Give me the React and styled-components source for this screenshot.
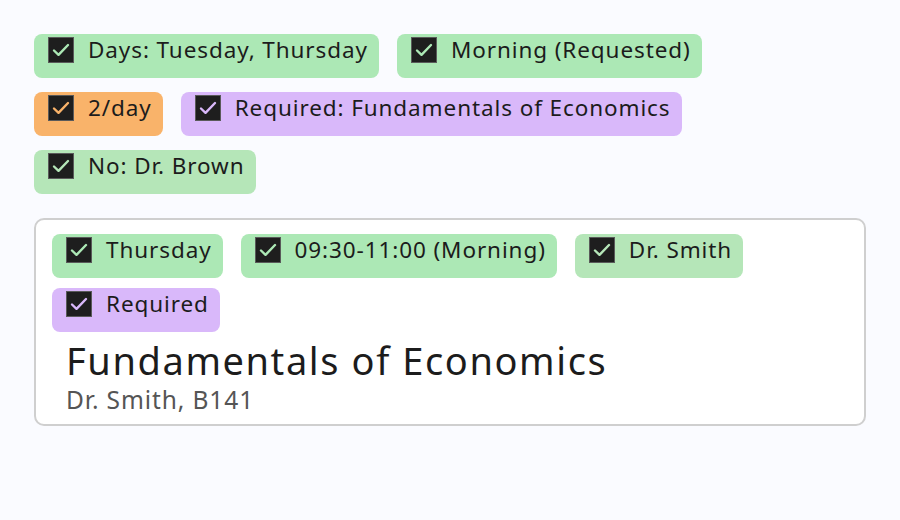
import React from 'react';
import styled, { createGlobalStyle } from 'styled-components';

const colors = {
  green: { bg: '#ace8b5', check: '#ace8b5' },
  pale: { bg: '#b5e6b8', check: '#b5e6b8' },
  orange: { bg: '#f9b36a', check: '#f9b36a' },
  purple: { bg: '#d9b8fa', check: '#d9b8fa' },
};

const filters = [
  { label: 'Days: Tuesday, Thursday', tone: 'green' },
  { label: 'Morning (Requested)', tone: 'green' },
  { label: '2/day', tone: 'orange' },
  { label: 'Required: Fundamentals of Economics', tone: 'purple' },
  { label: 'No: Dr. Brown', tone: 'pale' },
];

const tags = [
  { label: 'Thursday', tone: 'green' },
  { label: '09:30-11:00 (Morning)', tone: 'green' },
  { label: 'Dr. Smith', tone: 'pale' },
  { label: 'Required', tone: 'purple' },
];

function Chip({ label, tone }) {
  const c = colors[tone];
  return (
    <StyledChip $bg={c.bg}>
      <Box>
        <svg width="20" height="20" viewBox="0 0 20 20">
          <path d="M3 10.5l4.5 4.3L17 5" fill="none" stroke={c.check} strokeWidth="2.4" strokeLinecap="round" strokeLinejoin="round" />
        </svg>
      </Box>
      <span>{label}</span>
    </StyledChip>
  );
}

export default function App() {
  return (
    <>
      <GlobalStyle />
      <Page>
        <ChipRow>
          {filters.map((f) => <Chip key={f.label} {...f} />)}
        </ChipRow>
        <Card>
          <CardTags>
            {tags.map((t) => <Chip key={t.label} {...t} />)}
          </CardTags>
          <Info>
            <CourseTitle>Fundamentals of Economics</CourseTitle>
            <CourseMeta>Dr. Smith, B141</CourseMeta>
          </Info>
        </Card>
      </Page>
    </>
  );
}

const GlobalStyle = createGlobalStyle`
  body {
    margin: 0;
    background: #fafbff;
    font-family: "Noto Sans", "Open Sans", sans-serif;
    color: #1c1c1c;
  }
`
const Page = styled.div`
  padding: 34px;
  width: 832px;
`
const ChipRow = styled.div`
  display: flex;
  flex-wrap: wrap;
  gap: 14px 18px;
  width: 700px;
`
const StyledChip = styled.div`
  display: flex;
  align-items: center;
  align-self: flex-start;
  gap: 14px;
  height: 44px;
  box-sizing: border-box;
  padding: 1px 11px 13px 14px;
  border-radius: 8px;
  background: ${(p) => p.$bg};
  font-size: 22.5px;
  line-height: 30px;
  letter-spacing: 0.9px;
  white-space: nowrap;
`
const Box = styled.div`
  width: 26px;
  height: 26px;
  box-sizing: border-box;
  display: flex;
  align-items: center;
  justify-content: center;
  background: #1e1e1e;
  border: 1px solid #5a5a5a;
`
const Card = styled.div`
  margin-top: 24px;
  border: 2px solid #cfcfcf;
  border-radius: 10px;
  background: #ffffff;
  padding: 14px 16px 10px;
`
const CardTags = styled.div`
  display: flex;
  flex-wrap: wrap;
  gap: 10px 18px;
  width: 720px;
`
const Info = styled.div`
  padding: 2px 14px 0;
`
const CourseTitle = styled.div`
  font-size: 38px;
  letter-spacing: 1.6px;
  line-height: 52px;
`
const CourseMeta = styled.div`
  font-size: 24.5px;
  letter-spacing: 0.9px;
  line-height: 28px;
  color: #555;
`
